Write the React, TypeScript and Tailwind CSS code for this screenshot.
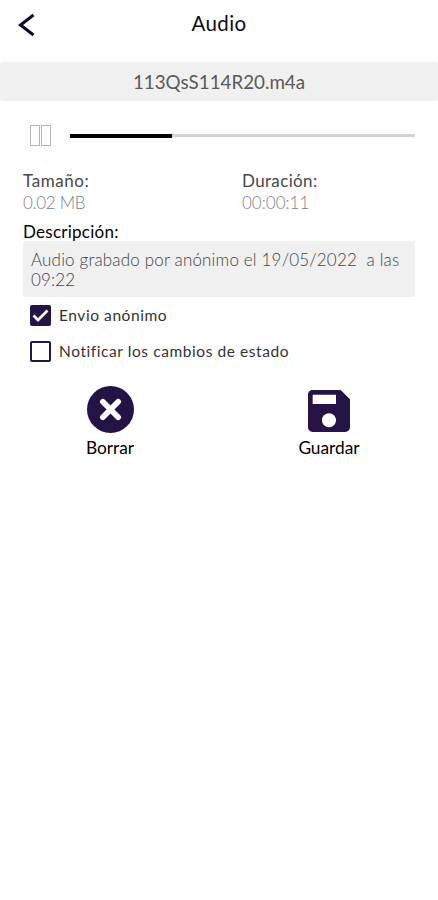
import React, { useState } from 'react';

const ActionButton = ({ label, children }: { label: string; children: React.ReactNode }) => (
  <button className="flex w-[120px] flex-col items-center text-black">
    <span className="flex h-[48px] items-center justify-center">{children}</span>
    <span className="mt-1 whitespace-nowrap text-[17.3px] leading-[22px]">{label}</span>
  </button>
);

const Checkbox = ({
  label,
  checked,
  onChange,
}: {
  label: string;
  checked: boolean;
  onChange: () => void;
}) => (
  <button onClick={onChange} className="flex h-[36px] items-center">
    <svg className="mt-px h-[21px] w-[21px] shrink-0" viewBox="0 0 21 21" fill="none">
      <rect x="1" y="1" width="19" height="19" rx="1" fill={checked ? '#251346' : '#fff'} stroke="#251346" strokeWidth="2" />
      {checked && <path d="M3.5 10.5L8 15L17.5 5.5" stroke="#fff" strokeWidth="2.7" />}
    </svg>
    <span className="ml-2 whitespace-nowrap text-[15.5px] leading-5 tracking-[0.57px] text-[#333]">{label}</span>
  </button>
);

const App = () => {
  const [anonymous, setAnonymous] = useState(true);
  const [notify, setNotify] = useState(false);

  return (
    <div className="h-[900px] w-[438px] overflow-hidden bg-white font-['Lato',sans-serif]">
      <header className="grid h-[62px] grid-cols-[1fr_auto_1fr] items-start">
        <button className="ml-[18px] mt-[13px] w-[18px]">
          <svg className="h-6 w-[18px]" viewBox="0 0 18 24" fill="none">
            <path d="M15.5 2L2.5 12L15.5 22" stroke="#0b0626" strokeWidth="3" />
          </svg>
        </button>
        <h1 className="mt-[10px] text-[20.5px] font-normal leading-[26px] tracking-[0.4px] text-[#0c0a1c]">Audio</h1>
      </header>

      <div className="flex h-[39px] items-center justify-center rounded-[3px] bg-[#f0f0f0] pt-px text-[18.8px] text-[#5a5a5a]">
        113QsS114R20.m4a
      </div>

      <main className="px-[23px]">
        {/* Player */}
        <div className="flex h-[69px] items-center">
          <div className="ml-[7px] flex gap-px">
            <span className="h-[21px] w-[10px] border border-[#b5b5b5]" />
            <span className="h-[21px] w-[10px] border border-[#b5b5b5]" />
          </div>
          <div className="ml-[19px] flex h-1 flex-1 items-center">
            <div className="h-1 w-[102px] bg-black" />
            <div className="h-[3px] flex-1 bg-[#d2d2d2]" />
          </div>
        </div>

        {/* File info */}
        <div className="grid grid-cols-[219px_1fr] text-[17px] leading-[22px]">
          <div>
            <p className="tracking-[0.55px] text-[#484848]">Tamaño:</p>
            <p className="tracking-[-0.3px] font-light text-[#808080]">0.02 MB</p>
          </div>
          <div>
            <p className="tracking-[0.35px] text-[#484848]">Duración:</p>
            <p className="font-light text-[#808080]">00:00:11</p>
          </div>
        </div>

        <h2 className="mt-[7px] h-[20px] text-[17px] font-normal leading-[21px] tracking-[0.25px] text-black">Descripción:</h2>
        <div className="h-[56px] whitespace-pre rounded-[3px] bg-[#f0f0f0] px-[8px] pt-[9px] text-[17px] font-light leading-[20px] tracking-[0.17px] text-[#444]">
          {'Audio grabado por anónimo el 19/05/2022  a las\n09:22'}
        </div>

        <div className="ml-[7px] flex flex-col">
          <Checkbox label="Envio anónimo" checked={anonymous} onChange={() => setAnonymous(!anonymous)} />
          <Checkbox label="Notificar los cambios de estado" checked={notify} onChange={() => setNotify(!notify)} />
        </div>
      </main>

      <div className="mt-[16px] flex gap-[99px] pl-[50px]">
        <ActionButton label="Borrar">
          <svg className="h-[47px] w-[47px]" viewBox="0 0 46 46" fill="none">
            <circle cx="23" cy="23" r="23" fill="#251346" />
            <path d="M15.5 15.5L30.5 30.5M30.5 15.5L15.5 30.5" stroke="#fff" strokeWidth="5.5" strokeLinecap="round" />
          </svg>
        </ActionButton>
        <ActionButton label="Guardar">
          <svg className="mt-[3px] h-[42px] w-[42px]" viewBox="3 3 18 18" fill="#251346">
            <path d="M17 3H5c-1.11 0-2 .9-2 2v14c0 1.1.89 2 2 2h14c1.1 0 2-.9 2-2V7l-4-4zm-5 16c-1.66 0-3-1.34-3-3s1.34-3 3-3 3 1.34 3 3-1.34 3-3 3zm3-10H5V5h10v4z" />
          </svg>
        </ActionButton>
      </div>
    </div>
  );
};

export default App;
